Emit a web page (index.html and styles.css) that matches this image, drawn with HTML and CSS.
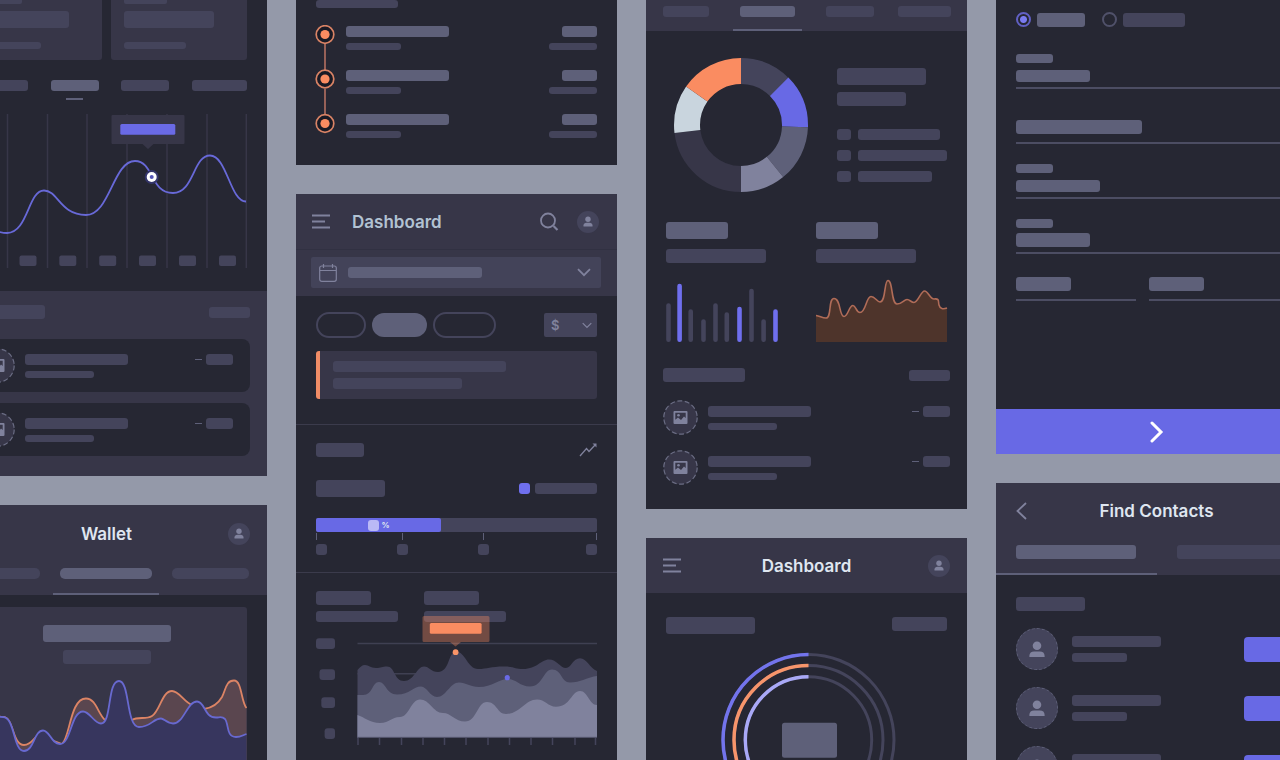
FILE: index.html
```html
<!DOCTYPE html>
<html lang="en">
<head>
  <meta charset="UTF-8" />
  <meta name="viewport" content="width=device-width, initial-scale=1.0"/>
  <title>Wireframe kit</title>
  <link rel="stylesheet" href="styles.css">
</head>
<body>
  <!-- Shared icons -->
  <svg class="sprite" aria-hidden="true">
    <symbol id="icon-menu" viewBox="0 0 18 15">
      <path d="M0 1.5h18M0 7.5h13M0 13.5h18" fill="none" stroke="currentColor" stroke-width="1.8"/>
    </symbol>
    <symbol id="icon-user" viewBox="0 0 22 22">
      <circle cx="11" cy="8.2" r="2.7" fill="currentColor"/>
      <path d="M6.5 15.5v-1.2c0-1.6 1.300-2.600 3-2.600h3c1.700 0 3 1 3 2.600v1.200z" fill="currentColor"/>
    </symbol>
    <symbol id="icon-contact" viewBox="0 0 42 42">
      <circle cx="21" cy="17.500" r="4.500" fill="currentColor"/>
      <path d="M13 29.500v-1.500c0-3 2-4.500 5-4.500h6c3 0 5 1.500 5 4.500v1.500z" fill="currentColor"/>
    </symbol>
    <symbol id="icon-search" viewBox="0 0 20 20">
      <circle cx="9" cy="8.500" r="7" fill="none" stroke="currentColor" stroke-width="1.8"/>
      <path d="M14.500 14l4 4" fill="none" stroke="currentColor" stroke-width="2.200"/>
    </symbol>
    <symbol id="icon-calendar" viewBox="0 0 18 18">
      <rect x="0.7" y="2" width="16.600" height="15.300" rx="2" fill="none" stroke="currentColor" stroke-width="1.200"/>
      <path d="M1 6.500h16M4.500 0v4M13.500 0v4" fill="none" stroke="currentColor" stroke-width="1.200"/>
    </symbol>
    <symbol id="icon-down" viewBox="0 0 14 9">
      <path d="M1 1.200l6 6 6-6" fill="none" stroke="currentColor" stroke-width="1.800"/>
    </symbol>
    <symbol id="icon-trend" viewBox="0 0 18 14">
      <path d="M1 13L7.500 5.500l2.500 3L16.500 1.500" fill="none" stroke="currentColor" stroke-width="1.300"/>
      <path d="M13.500 0.500h4v4z" fill="currentColor"/>
    </symbol>
    <symbol id="icon-image" viewBox="0 0 35 35">
      <circle cx="17.500" cy="17.500" r="16.700" fill="#373648" stroke="#6b6d84" stroke-width="1.200" stroke-dasharray="5 2.500"/>
      <path fill="#80829d" fill-rule="evenodd" d="M11.500 11h12a1 1 0 0 1 1 1v11a1 1 0 0 1-1 1h-12a1 1 0 0 1-1-1v-11a1 1 0 0 1 1-1zM12.300 12.800v7l2.700-2.300 3 2.500 3-3.500 1.700 1.500v-5.200z"/>
      <circle cx="15.500" cy="15.300" r="1.300" fill="#80829d"/>
    </symbol>
  </svg>

  <main class="board">

    <!-- Column 1 -->
    <div class="column">
      <section class="screen">
        <div class="stats">
          <div class="stat">
            <span class="bar stub w43"></span>
            <span class="bar xl w90"></span>
            <span class="bar s w62"></span>
          </div>
          <div class="stat">
            <span class="bar stub w43"></span>
            <span class="bar xl w90"></span>
            <span class="bar s w62"></span>
          </div>
        </div>
        <nav class="range-tabs">
          <a href="#" aria-label="Day"><span class="bar w62"></span></a>
          <a href="#" class="active" aria-label="Week"><span class="bar light w48"></span></a>
          <a href="#" aria-label="Month"><span class="bar w48"></span></a>
          <a href="#" aria-label="Year"><span class="bar w55"></span></a>
        </nav>
        <svg class="chart line-chart" viewBox="-34 112 281 158">
          <path d="M-32.500 114v154M7.500 114v154M47.500 114v154M87 114v154M127 114v154M167 114v154M207 114v154M246.300 114v154" stroke="#373648" stroke-width="1.500"/>
          <g fill="#44445b">
            <rect x="-20" y="255.500" width="17" height="10.500" rx="2"/>
            <rect x="19.500" y="255.500" width="17" height="10.500" rx="2"/>
            <rect x="59.300" y="255.500" width="17" height="10.500" rx="2"/>
            <rect x="99.200" y="255.500" width="17" height="10.500" rx="2"/>
            <rect x="139" y="255.500" width="17" height="10.500" rx="2"/>
            <rect x="179" y="255.500" width="17" height="10.500" rx="2"/>
            <rect x="219" y="255.500" width="17" height="10.500" rx="2"/>
          </g>
          <path d="M-34 215C-20 222 -7 233 7 233C28 233 28 190.500 44 190.500C58 190.500 60 215 86 215C110 215 113 161 135 161C154 161 150 193 173 193C194 193 193 155.500 210 155.500C227 155.500 230 201.500 246 201.500" fill="none" stroke="#6869d8" stroke-width="1.800"/>
          <path d="M112.500 115h71a1 1 0 0 1 1 1v27a1 1 0 0 1-1 1h-30l-5.500 5-5.500-5h-30a1 1 0 0 1-1-1v-27a1 1 0 0 1 1-1z" fill="#373648"/>
          <rect x="120.300" y="124" width="55" height="10.700" rx="1.500" fill="#6a6ae6"/>
          <circle cx="151.700" cy="177" r="7" fill="#34356a"/>
          <circle cx="151.700" cy="177" r="5" fill="#fff"/>
          <circle cx="151.700" cy="177" r="2" fill="#5455b8"/>
        </svg>
        <div class="activity raised">
          <div class="activity-head">
            <span class="bar l w82"></span>
            <span class="bar w41"></span>
          </div>
          <ul class="activity-list">
            <li>
              <svg class="thumb"><use href="#icon-image"/></svg>
              <div class="lines"><span class="bar w103"></span><span class="bar s w69"></span></div>
              <div class="amount"><i class="dash"></i><span class="bar w27"></span></div>
            </li>
            <li>
              <svg class="thumb"><use href="#icon-image"/></svg>
              <div class="lines"><span class="bar w103"></span><span class="bar s w69"></span></div>
              <div class="amount"><i class="dash"></i><span class="bar w27"></span></div>
            </li>
          </ul>
        </div>
      </section>

      <section class="screen last">
        <header class="top wallet-top">
          <div class="title-row">
            <h2>Wallet</h2>
            <button class="avatar" aria-label="Profile"><svg><use href="#icon-user"/></svg></button>
          </div>
          <nav class="tabs wallet-tabs">
            <a href="#" aria-label="Cards"><span class="bar round w77"></span></a>
            <a href="#" class="active" aria-label="Balance"><span class="bar round light w92"></span></a>
            <a href="#" aria-label="History"><span class="bar round w77"></span></a>
          </nav>
        </header>
        <div class="balance">
          <span class="bar xl light w128"></span>
          <span class="bar l w88"></span>
          <svg class="chart" viewBox="-34 678 281 100">
            <path d="M-34 725C-20 700 -8 717 3 717C14 717 12 745 24 745C31 745 34 738 38 735L62 744C70 738 70 698.500 86 698.500C96 698.500 98 714 105 720L132 720C138 716 146 720 152 716C160 711 162 691 172 691C179 691 184 702 192 705L204 709C211 708 218 704 222 697C226 689 226 680.500 234 680.500C242 680.500 241 702 246.500 708V778H-34Z" fill="#5a464f"/>
            <path d="M-34 725C-20 700 -8 717 3 717C14 717 12 745 24 745C31 745 34 738 38 735L62 744C70 738 70 698.500 86 698.500C96 698.500 98 714 105 720L132 720C138 716 146 720 152 716C160 711 162 691 172 691C179 691 184 702 192 705L204 709C211 708 218 704 222 697C226 689 226 680.500 234 680.500C242 680.500 241 702 246.500 708" fill="none" stroke="#dc8465" stroke-width="1.800"/>
            <path d="M-34 730C-20 715 -8 717 3 717C15 717 13 751 24 751C34 751 34 730.500 43 730.500C50 730.500 51 744 60 744C71 744 71 711.500 83 711.500C90 711.500 94 723.500 101 723.500C112 723.500 107 681 119 681C130 681 126 727 139 727C151 727 153 718.500 161 718.500C164 718.500 167 723.500 173 723.500C184 723.500 187 701.500 197 701.500C205 701.500 204 717.500 216 717.500C220 717.500 222 716 225 719C229 724 226 737 236 737C241 737 243 735 246.500 734V778H-34Z" fill="#37365e"/>
            <path d="M-34 730C-20 715 -8 717 3 717C15 717 13 751 24 751C34 751 34 730.500 43 730.500C50 730.500 51 744 60 744C71 744 71 711.500 83 711.500C90 711.500 94 723.500 101 723.500C112 723.500 107 681 119 681C130 681 126 727 139 727C151 727 153 718.500 161 718.500C164 718.500 167 723.500 173 723.500C184 723.500 187 701.500 197 701.500C205 701.500 204 717.500 216 717.500C220 717.500 222 716 225 719C229 724 226 737 236 737C241 737 243 735 246.500 734" fill="none" stroke="#6869d0" stroke-width="1.800"/>
          </svg>
        </div>
      </section>
    </div>

    <!-- Column 2 -->
    <div class="column">
      <section class="screen steps">
        <span class="bar steps-title w82"></span>
        <div class="steps-body">
          <svg class="steps-line" viewBox="0 0 20 110">
            <path d="M10 19v26M10 64v25" stroke="#a4685c" stroke-width="1.800"/>
            <g fill="#191a25" stroke="#d98365" stroke-width="1.700">
              <circle cx="10" cy="9.500" r="8.800"/>
              <circle cx="10" cy="54" r="8.800"/>
              <circle cx="10" cy="98.500" r="8.800"/>
            </g>
            <g fill="#fa8c61">
              <circle cx="10" cy="9.500" r="4.600"/>
              <circle cx="10" cy="54" r="4.600"/>
              <circle cx="10" cy="98.500" r="4.600"/>
            </g>
          </svg>
          <ol class="steps-list">
            <li>
              <div class="lines"><span class="bar light w103"></span><span class="bar s w55"></span></div>
              <div class="lines end"><span class="bar light w35"></span><span class="bar s w48"></span></div>
            </li>
            <li>
              <div class="lines"><span class="bar light w103"></span><span class="bar s w55"></span></div>
              <div class="lines end"><span class="bar light w35"></span><span class="bar s w48"></span></div>
            </li>
            <li>
              <div class="lines"><span class="bar light w103"></span><span class="bar s w55"></span></div>
              <div class="lines end"><span class="bar light w35"></span><span class="bar s w48"></span></div>
            </li>
          </ol>
        </div>
      </section>

      <section class="screen last">
        <header class="top">
          <div class="title-row left">
            <button class="menu" aria-label="Menu"><svg><use href="#icon-menu"/></svg></button>
            <h2 class="muted">Dashboard</h2>
            <button class="search" aria-label="Search"><svg><use href="#icon-search"/></svg></button>
            <button class="avatar" aria-label="Profile"><svg><use href="#icon-user"/></svg></button>
          </div>
          <div class="filter">
            <button class="date-picker" aria-label="Date range">
              <svg class="calendar"><use href="#icon-calendar"/></svg>
              <span class="bar light w134"></span>
              <svg class="down"><use href="#icon-down"/></svg>
            </button>
          </div>
        </header>

        <div class="block overview">
          <div class="pills">
            <button class="pill w50" aria-label="All"></button>
            <button class="pill on w55" aria-label="Income"></button>
            <button class="pill w63" aria-label="Expenses"></button>
            <label class="currency">
              <select aria-label="Currency"><option>$</option></select>
              <svg class="down small"><use href="#icon-down"/></svg>
            </label>
          </div>
          <div class="notice">
            <span class="bar w173"></span>
            <span class="bar w129"></span>
          </div>
        </div>

        <div class="block goal">
          <div class="between">
            <span class="bar l w48"></span>
            <svg class="trend"><use href="#icon-trend"/></svg>
          </div>
          <div class="between goal-row">
            <span class="bar xl w69"></span>
            <div class="legend"><i class="swatch"></i><span class="bar w62"></span></div>
          </div>
          <div class="progress">
            <div class="progress-fill" style="width: 44.6%"><i class="value"></i>%</div>
          </div>
          <div class="scale">
            <span class="mark first"></span>
            <span class="mark"></span>
            <span class="mark"></span>
            <span class="mark end"></span>
          </div>
        </div>

        <div class="block volume">
          <div class="pairs">
            <div><span class="bar l w55"></span><span class="bar w82"></span></div>
            <div><span class="bar l w55"></span><span class="bar w82"></span></div>
          </div>
          <svg class="chart area-chart" viewBox="316 630 281 118">
            <g fill="#44445b">
              <rect x="316" y="638.300" width="19" height="10.700" rx="3"/>
              <rect x="319.500" y="669.300" width="15.500" height="10.700" rx="3"/>
              <rect x="321.300" y="697.300" width="13.700" height="10.700" rx="3"/>
              <rect x="324.600" y="728.300" width="10.400" height="10.700" rx="3"/>
            </g>
            <path d="M357.500 643.500H597M357.500 673.700H597" stroke="#3f4052" stroke-width="1.400"/>
            <path d="M357.500 670C360 667 362 665 365 665C369 665 370 668 376 668C381 668 382 666.500 387 666.500C395 666.500 394 681 404 681C414 681 417 666.500 424 666.500C429 666.500 431 672 438 672C450 672 448 651.500 456 651.500C465 651.500 468 669 478 669C488 669 490 666.500 504 666.500C515 666.500 515 669 523 669C537 669 541 659.500 549 659.500C557 659.500 560 668 566 668C571 668 573 658.300 580 658.300C587 658.300 590 669 597 671V737H357.500Z" fill="#44445b"/>
            <path d="M357.500 695H363C373 695 372 682 379 682C386 682 386 694.500 397 694.500C410 694.500 413 686.500 421 686.500C427 686.500 430 697 437 697C446 697 450 682.500 459 682.500C466 682.500 470 687 479 687C492 687 499 679 508 679C516 679 520 686.500 530 686.500C543 686.500 543 669.500 552 669.500C562 669.500 561 682.500 570 682.500C580 682.500 588 677 597 676V737H357.500Z" fill="#5e6079"/>
            <path d="M357.500 715C364 717 370 723 380 723C390 723 391 717 400 717C409 717 411 699.500 420 699.500C430 699.500 433 713 443 713C451 713 455 721.500 465 721.500C477 721.500 477 702 487 702C497 702 497 714 506 714C520 714 525 699.500 537 699.500C545 699.500 548 706.700 556 706.700C571 706.700 571 691 580 691C588 691 589 705 597 705V737H357.500Z" fill="#80829d"/>
            <path d="M357 737.300H597" stroke="#5e6079"/>
            <path d="M358 738v7M379.500 738v7M401.500 738v7M423 738v7M444.500 738v7M466 738v7M488 738v7M509.500 738v7M531 738v7M552.500 738v7M575 738v7M595.500 738v7" stroke="#44445b" stroke-width="1.500"/>
            <path d="M424 616h64a1.500 1.500 0 0 1 1.500 1.500v23a1.500 1.500 0 0 1-1.500 1.500h-27l-5.500 4.500-5.500-4.500h-26a1.500 1.500 0 0 1-1.500-1.500v-23a1.500 1.500 0 0 1 1.500-1.500z" fill="#fa8c61" fill-opacity="0.36"/>
            <rect x="429.800" y="623" width="51.800" height="10.700" rx="1.500" fill="#fa8c61"/>
            <circle cx="455.600" cy="652.200" r="2.900" fill="#fa9468"/>
            <circle cx="507.300" cy="677.700" r="2.600" fill="#6a6ae6"/>
          </svg>
        </div>
      </section>
    </div>

    <!-- Column 3 -->
    <div class="column">
      <section class="screen report">
        <header class="top">
          <nav class="tabs report-tabs">
            <a href="#" aria-label="Daily"><span class="bar w46"></span></a>
            <a href="#" class="active" aria-label="Weekly"><span class="bar light w55"></span></a>
            <a href="#" aria-label="Monthly"><span class="bar w48"></span></a>
            <a href="#" aria-label="Yearly"><span class="bar w53"></span></a>
          </nav>
        </header>
        <div class="share">
          <svg class="donut" viewBox="0 0 134 134">
            <g fill="none" stroke-width="26" transform="rotate(-90 67 67)">
              <circle cx="67" cy="67" r="54" pathLength="360" stroke="#44445b" stroke-dasharray="46 314"/>
              <circle cx="67" cy="67" r="54" pathLength="360" stroke="#6869e5" stroke-dasharray="47 313" stroke-dashoffset="-45"/>
              <circle cx="67" cy="67" r="54" pathLength="360" stroke="#5e6079" stroke-dasharray="49 311" stroke-dashoffset="-92"/>
              <circle cx="67" cy="67" r="54" pathLength="360" stroke="#80829d" stroke-dasharray="39 321" stroke-dashoffset="-141"/>
              <circle cx="67" cy="67" r="54" pathLength="360" stroke="#373648" stroke-dasharray="83 277" stroke-dashoffset="-180"/>
              <circle cx="67" cy="67" r="54" pathLength="360" stroke="#c9d5de" stroke-dasharray="42 318" stroke-dashoffset="-263"/>
              <circle cx="67" cy="67" r="54" pathLength="360" stroke="#fa8c61" stroke-dasharray="55 305" stroke-dashoffset="-305"/>
            </g>
          </svg>
          <div class="share-info">
            <span class="bar xl w89"></span>
            <span class="bar l w69"></span>
            <ul class="keys">
              <li><i class="key"></i><span class="bar w82"></span></li>
              <li><i class="key"></i><span class="bar w89"></span></li>
              <li><i class="key"></i><span class="bar w74"></span></li>
            </ul>
          </div>
        </div>
        <div class="minis">
          <div class="mini">
            <span class="bar xl light w62"></span>
            <span class="bar l w100"></span>
            <svg class="chart" viewBox="666 279 131 64">
              <g fill="none" stroke="#44445b" stroke-width="4.600" stroke-linecap="round">
                <path d="M668.500 305.500V339.800M690.700 311.500V339.800M703.500 321.500V339.800M715.500 305.500V339.800M726.800 314.500V339.800M751.500 291V339.800M763.600 321.500V339.800"/>
                <path stroke="#6f6fee" d="M679.600 286V339.800M739.500 309V339.800M775.500 311.500V339.800"/>
              </g>
            </svg>
          </div>
          <div class="mini">
            <span class="bar xl light w62"></span>
            <span class="bar l w100"></span>
            <svg class="chart" viewBox="816 279 131 64">
              <path fill="#4e342b" d="M816 315.500C820 316 822 318 826 318C832 318 828 298.500 834 298.500C841 298.500 839 316.500 844 316.500C848 316.500 849 305.500 853 305.500C856 305.500 856 312.500 860 312.500C866 312.500 866 296.500 871 296.500C875 296.500 877 302 880 302C886 302 884 280.500 888 280.500C893 280.500 891 304 897 304C902 304 904 299.500 907 299.500C910 299.500 911 302.500 914 302.500C918 302.500 921 291 924.500 291C928 291 930 299 934 299C940 298 938 302 939 305C940 309 943 309.500 947 308V342H816Z"/>
              <path fill="none" stroke="#b06c58" stroke-width="1.600" d="M816 315.500C820 316 822 318 826 318C832 318 828 298.500 834 298.500C841 298.500 839 316.500 844 316.500C848 316.500 849 305.500 853 305.500C856 305.500 856 312.500 860 312.500C866 312.500 866 296.500 871 296.500C875 296.500 877 302 880 302C886 302 884 280.500 888 280.500C893 280.500 891 304 897 304C902 304 904 299.500 907 299.500C910 299.500 911 302.500 914 302.500C918 302.500 921 291 924.500 291C928 291 930 299 934 299C940 298 938 302 939 305C940 309 943 309.500 947 308"/>
            </svg>
          </div>
        </div>
        <div class="activity">
          <div class="activity-head">
            <span class="bar l w82"></span>
            <span class="bar w41"></span>
          </div>
          <ul class="activity-list">
            <li>
              <svg class="thumb"><use href="#icon-image"/></svg>
              <div class="lines"><span class="bar w103"></span><span class="bar s w69"></span></div>
              <div class="amount"><i class="dash"></i><span class="bar w27"></span></div>
            </li>
            <li>
              <svg class="thumb"><use href="#icon-image"/></svg>
              <div class="lines"><span class="bar w103"></span><span class="bar s w69"></span></div>
              <div class="amount"><i class="dash"></i><span class="bar w27"></span></div>
            </li>
          </ul>
        </div>
      </section>

      <section class="screen last">
        <header class="top">
          <div class="title-row">
            <button class="menu" aria-label="Menu"><svg><use href="#icon-menu"/></svg></button>
            <h2>Dashboard</h2>
            <button class="avatar" aria-label="Profile"><svg><use href="#icon-user"/></svg></button>
          </div>
        </header>
        <div class="rings">
          <div class="between top-align">
            <span class="bar xl w89"></span>
            <span class="bar l w55"></span>
          </div>
          <svg class="chart" viewBox="666 652 281 180">
            <g fill="none" stroke="#44445b" stroke-width="3">
              <circle cx="808.500" cy="740" r="85.500"/>
              <circle cx="808.500" cy="740" r="74.500"/>
              <circle cx="808.500" cy="740" r="63.200"/>
            </g>
            <g fill="none" stroke-width="3.500">
              <path d="M808.500 654.500a85.500 85.500 0 0 0 0 171" stroke="#7374ec"/>
              <path d="M808.500 665.500a74.500 74.500 0 0 0 0 149" stroke="#f7956b"/>
              <path d="M808.500 676.800a63.200 63.200 0 0 0 0 126.400" stroke="#a9a9f7"/>
            </g>
            <rect x="782" y="722.700" width="55" height="35" rx="2.500" fill="#5e6079"/>
          </svg>
        </div>
      </section>
    </div>

    <!-- Column 4 -->
    <div class="column">
      <section class="screen">
        <form class="details">
          <div class="choices">
            <label><input type="radio" name="kind" aria-label="Personal" checked><span class="bar l light w48"></span></label>
            <label><input type="radio" name="kind" aria-label="Business"><span class="bar l w62"></span></label>
          </div>
          <label class="field">
            <span class="bar m light w37"></span>
            <span class="control"><input type="text" aria-label="First name"><span class="bar v light w74"></span></span>
          </label>
          <label class="field">
            <span class="control plain"><input type="text" aria-label="Last name"><span class="bar l light w126"></span></span>
          </label>
          <label class="field">
            <span class="bar m light w37"></span>
            <span class="control"><input type="text" aria-label="Email"><span class="bar v light w84"></span></span>
          </label>
          <label class="field">
            <span class="bar m light w37"></span>
            <span class="control"><input type="text" aria-label="Phone"><span class="bar l light w74"></span></span>
          </label>
          <div class="field-pair">
            <label class="field">
              <span class="control plain"><input type="text" aria-label="City"><span class="bar l light w55"></span></span>
            </label>
            <label class="field">
              <span class="control plain"><input type="text" aria-label="Postcode"><span class="bar l light w55"></span></span>
            </label>
          </div>
          <button type="button" class="next" aria-label="Next">
            <svg viewBox="0 0 14 22"><path d="M2 2l9 9-9 9" fill="none" stroke="currentColor" stroke-width="3" stroke-linecap="round"/></svg>
          </button>
        </form>
      </section>

      <section class="screen last">
        <header class="top">
          <div class="title-row">
            <button class="back" aria-label="Back"><svg viewBox="0 0 11 18"><path d="M10 1L1.500 9l8.500 8" fill="none" stroke="currentColor" stroke-width="1.800"/></svg></button>
            <h2>Find Contacts</h2>
          </div>
          <nav class="tabs half-tabs">
            <a href="#" class="active" aria-label="All contacts"><span class="bar l light w120"></span></a>
            <a href="#" aria-label="Suggested"><span class="bar l w120"></span></a>
          </nav>
        </header>
        <div class="contacts">
          <span class="bar l w69"></span>
          <ul class="contact-list">
            <li>
              <svg class="face"><use href="#icon-contact"/></svg>
              <div class="lines"><span class="bar w89"></span><span class="bar m w55"></span></div>
              <button class="add" aria-label="Add contact"></button>
            </li>
            <li>
              <svg class="face"><use href="#icon-contact"/></svg>
              <div class="lines"><span class="bar w89"></span><span class="bar m w55"></span></div>
              <button class="add" aria-label="Add contact"></button>
            </li>
            <li>
              <svg class="face"><use href="#icon-contact"/></svg>
              <div class="lines"><span class="bar w89"></span><span class="bar m w55"></span></div>
              <button class="add" aria-label="Add contact"></button>
            </li>
          </ul>
        </div>
      </section>
    </div>

  </main>
</body>
</html>
```

FILE: styles.css
```css
* {
  box-sizing: border-box;
}
body {
  margin: 0;
  height: 100vh;
  overflow: hidden;
  background: #9499a9;
  color: #dfe6f0;
  font-family: Inter, "Liberation Sans", sans-serif;
}
ul, ol {
  list-style: none;
  margin: 0;
  padding: 0;
}
button {
  padding: 0;
  border: none;
  background: none;
  color: #80829d;
  cursor: pointer;
}
svg {
  display: block;
}
.sprite {
  display: none;
}

/* Board: four phone columns, the outer two run off the edges */
.board {
  display: grid;
  grid-template-columns: repeat(4, 1fr);
  gap: 29px;
  width: calc(100% + 91px);
  height: 100%;
  margin-left: -54px;
}
.column {
  display: flex;
  flex-direction: column;
  gap: 29px;
  height: 100vh;
  min-width: 0;
  overflow: hidden;
}
.screen {
  background: #262733;
  flex: none;
}
.screen.last {
  flex: 1;
  min-height: 0;
  overflow: hidden;
}

/* Placeholder bars */
.bar {
  display: block;
  flex: none;
  height: 11px;
  border-radius: 3px;
  background: #44445b;
}
.bar.s { height: 7px; }
.bar.m { height: 9px; }
.bar.v { height: 12px; }
.bar.l { height: 14px; }
.bar.xl { height: 17px; }
.bar.stub { height: 4px; border-radius: 0 0 2px 2px; }
.bar.light { background: #5e6079; }
.bar.round { border-radius: 5px; }
.w27 { width: 27px; }
.w35 { width: 35px; }
.w37 { width: 37px; }
.w41 { width: 41px; }
.w43 { width: 43px; }
.w46 { width: 46px; }
.w48 { width: 48px; }
.w50 { width: 50px; }
.w53 { width: 53px; }
.w55 { width: 55px; }
.w62 { width: 62px; }
.w63 { width: 63px; }
.w69 { width: 69px; }
.w74 { width: 74px; }
.w77 { width: 77px; }
.w82 { width: 82px; }
.w84 { width: 84px; }
.w88 { width: 88px; }
.w89 { width: 89px; }
.w90 { width: 90px; }
.w92 { width: 92px; }
.w100 { width: 100px; }
.w103 { width: 103px; }
.w120 { width: 120px; }
.w126 { width: 126px; }
.w128 { width: 128px; }
.w129 { width: 129px; }
.w134 { width: 134px; }
.w173 { width: 173px; }

.lines {
  display: flex;
  flex-direction: column;
  gap: 6px;
}
.lines.end {
  align-items: flex-end;
}
.between {
  display: flex;
  justify-content: space-between;
  align-items: center;
}
.top-align {
  align-items: flex-start;
}
.chart {
  width: 100%;
  height: auto;
  overflow: visible;
}

/* Screen header */
.top {
  background: #373648;
}
.title-row {
  display: grid;
  grid-template-columns: 1fr auto 1fr;
  align-items: center;
  height: 55px;
  padding: 0 17px;
}
.title-row h2 {
  grid-column: 2;
  margin: 0;
  font-size: 17px;
  line-height: 24px;
  font-weight: 600;
}
.title-row .avatar {
  grid-column: 3;
  justify-self: end;
}
.title-row.left {
  display: flex;
  padding: 0 18px 0 16px;
}
.title-row.left h2 {
  flex: 1;
  margin-left: 22px;
}
.title-row h2.muted {
  color: #b2c2d2;
}
.menu svg {
  width: 18px;
  height: 15px;
}
.search {
  margin-right: 18px;
}
.search svg {
  width: 20px;
  height: 20px;
}
.back {
  justify-self: start;
  margin-left: 3px;
}
.back svg {
  width: 11px;
  height: 18px;
}
.avatar {
  border-radius: 50%;
  background: #44445b;
}
.avatar svg {
  width: 22px;
  height: 22px;
}

/* Tabs */
.tabs {
  display: flex;
  padding: 0 17px;
}
.tabs a {
  border-bottom: 2px solid transparent;
}
.tabs a.active {
  border-color: #5e6079;
}
.wallet-top .title-row {
  height: 58px;
}
.wallet-tabs {
  gap: 13px;
}
.wallet-tabs a {
  padding: 5px 0 14px;
}
.wallet-tabs .active,
.report-tabs .active {
  padding-left: 7px;
  padding-right: 7px;
}
.report-tabs {
  gap: 24px;
}
.report-tabs a {
  padding: 6px 0 12px;
}
.half-tabs {
  padding: 0;
}
.half-tabs a {
  flex: 1;
  display: flex;
  justify-content: center;
  padding: 7px 0 14px;
}

/* Stats and line chart */
.stats {
  display: grid;
  grid-template-columns: 1fr 1fr;
  gap: 9px;
  padding: 0 20px;
}
.stat {
  padding: 0 13px 11px;
  border-radius: 0 0 3px 3px;
  background: #373648;
}
.stat .bar.xl {
  margin: 7px 0 14px;
}
.range-tabs {
  display: flex;
  justify-content: space-between;
  padding: 20px 20px 12px;
}
.range-tabs a {
  height: 20px;
}
.range-tabs .active::after {
  content: "";
  display: block;
  width: 17px;
  height: 2px;
  margin: 7px auto 0;
  background: #5e6079;
}
.line-chart {
  padding: 0 20px;
  margin-bottom: 21px;
}

/* Activity list */
.activity {
  padding: 25px 17px 24px;
}
.activity-head {
  display: flex;
  justify-content: space-between;
  align-items: center;
  margin-bottom: 18px;
}
.activity-list {
  display: grid;
  gap: 15px;
}
.activity-list li {
  display: flex;
  align-items: center;
  gap: 10px;
}
.thumb {
  width: 35px;
  height: 35px;
}
.amount {
  display: flex;
  align-items: center;
  align-self: flex-start;
  gap: 4px;
  margin: 6px 0 0 auto;
}
.dash {
  width: 7px;
  height: 1px;
  background: #5e6079;
}
.raised {
  padding: 14px 17px 20px;
  background: #373648;
}
.raised .activity-head {
  margin-bottom: 20px;
}
.raised .activity-list {
  gap: 11px;
}
.raised li {
  padding: 9px 17px;
  border-radius: 8px;
  background: #262733;
}

/* Wallet */
.balance {
  display: flex;
  flex-direction: column;
  align-items: center;
  gap: 8px;
  margin: 12px 20px 0;
  padding-top: 18px;
  border-radius: 3px;
  background: #373648;
}
.balance .chart {
  margin-top: 6px;
}

/* Steps */
.steps {
  padding: 0 20px 27px;
}
.steps-title {
  height: 8px;
}
.steps-body {
  display: flex;
  gap: 11px;
  margin-top: 17px;
}
.steps-line {
  width: 20px;
  height: 110px;
  margin-left: -1px;
}
.steps-list {
  flex: 1;
  display: grid;
  gap: 20px;
  align-content: start;
  padding-top: 1px;
}
.steps-list li {
  display: flex;
  justify-content: space-between;
}

/* Dashboard */
.filter {
  padding: 7px 16px 8px 15px;
  border-top: 1px solid #313142;
}
.date-picker {
  display: flex;
  align-items: center;
  width: 100%;
  height: 31px;
  padding: 0 10px 0 8px;
  border-radius: 2px;
  background: #434359;
}
.calendar {
  width: 18px;
  height: 18px;
  margin-right: 11px;
}
.down {
  width: 14px;
  height: 9px;
  margin-left: auto;
}
.down.small {
  width: 10px;
  height: 7px;
}
.block {
  padding: 18px 20px 17px;
  border-bottom: 1px solid #3b3b4c;
}
.overview {
  padding: 16px 20px 25px;
}
.pills {
  display: flex;
  align-items: center;
  gap: 6px;
  margin-bottom: 13px;
}
.pill {
  height: 26px;
  border: 2px solid #44445b;
  border-radius: 13px;
}
.pill.on {
  height: 24px;
  border: none;
  background: #5e6079;
}
.currency {
  display: grid;
  align-items: center;
  width: 53px;
  height: 24px;
  margin-left: auto;
  border-radius: 2px;
  background: #44445b;
}
.currency select,
.currency svg {
  grid-area: 1 / 1;
}
.currency select {
  appearance: none;
  width: 100%;
  height: 24px;
  padding: 0 7px;
  border: none;
  background: none;
  color: #80829d;
  font-family: inherit;
  font-size: 13px;
  font-weight: 600;
}
.currency svg {
  justify-self: end;
  margin-right: 5px;
  color: #80829d;
  pointer-events: none;
}
.notice {
  display: grid;
  gap: 6px;
  padding: 10px 13px;
  border-left: 4px solid #f08c66;
  border-radius: 3px;
  background: #373648;
}
.trend {
  width: 18px;
  height: 14px;
  color: #80829d;
}
.goal-row {
  margin: 23px 0 21px;
}
.legend {
  display: flex;
  gap: 5px;
}
.swatch {
  width: 11px;
  height: 11px;
  border-radius: 3px;
  background: #6f6fee;
}
.progress {
  border-radius: 2px;
  background: #44445b;
}
.progress-fill {
  display: flex;
  align-items: center;
  justify-content: center;
  gap: 3px;
  height: 14px;
  border-radius: 2px;
  background: #6869e5;
  font-size: 8px;
  font-weight: 700;
}
.value {
  width: 11px;
  height: 11px;
  border-radius: 3px;
  background: #bab9f6;
}
.scale {
  display: grid;
  grid-template-columns: 81fr 81fr 108fr 11px;
}
.mark {
  width: 11px;
}
.mark::before {
  content: "";
  display: block;
  width: 1px;
  height: 7px;
  margin: 1px auto 4px;
  background: #5e6079;
}
.mark.first::before {
  margin-left: 0;
}
.mark.end::before {
  margin-right: 0;
}
.mark::after {
  content: "";
  display: block;
  height: 11px;
  border-radius: 3px;
  background: #44445b;
}
.pairs {
  display: grid;
  grid-template-columns: 108fr 173fr;
}
.pairs .l {
  margin-bottom: 6px;
}
.area-chart {
  margin-top: 8px;
}

/* Report */
.share {
  display: flex;
  gap: 29px;
  padding: 27px 20px 30px 28px;
}
.donut {
  width: 134px;
  height: 134px;
}
.share-info {
  padding-top: 10px;
}
.share-info .xl {
  margin-bottom: 7px;
}
.keys {
  display: grid;
  gap: 10px;
  margin-top: 23px;
}
.keys li {
  display: flex;
  gap: 7px;
}
.key {
  width: 14px;
  height: 11px;
  border-radius: 3px;
  background: #44445b;
}
.minis {
  display: grid;
  grid-template-columns: 1fr 1fr;
  gap: 19px;
  padding: 0 20px;
}
.mini .l {
  margin: 10px 0 16px;
}

/* Rings */
.rings {
  padding: 24px 20px 0;
}
.rings .chart {
  margin-top: 18px;
}

/* Details form */
.choices {
  display: flex;
  gap: 17px;
  padding: 12px 0 7px;
}
.choices label {
  display: flex;
  align-items: center;
  gap: 6px;
}
.choices input {
  appearance: none;
  width: 15px;
  height: 15px;
  margin: 0;
  border: 2px solid #50516a;
  border-radius: 50%;
}
.choices input:checked {
  border-color: #6160c4;
  background: radial-gradient(circle, #7a7bf0 3px, transparent 4px);
}
.details {
  padding: 0 20px;
}
.field {
  display: flex;
  flex-direction: column;
  justify-content: flex-end;
  height: 55px;
}
.control {
  display: grid;
  align-items: end;
  height: 26px;
}
.control input,
.control .bar {
  grid-area: 1 / 1;
}
.control input {
  width: 100%;
  height: 26px;
  padding: 0;
  border: none;
  border-bottom: 2px solid #4c4d63;
  background: none;
  color: #dfe6f0;
  outline: none;
}
.control .bar {
  margin-bottom: 7px;
}
.control.plain .bar {
  margin-bottom: 10px;
}
.field-pair {
  display: grid;
  grid-template-columns: 120fr 148fr;
  gap: 13px;
}
.field-pair .field {
  height: 47px;
}
.next {
  display: flex;
  align-items: center;
  justify-content: center;
  width: calc(100% + 40px);
  height: 45px;
  margin: 108px -20px 0;
  background: #6869e5;
  color: #fff;
}
.next svg {
  width: 14px;
  height: 22px;
}

/* Contacts */
.contacts {
  padding: 22px 20px 0;
}
.contact-list {
  display: grid;
  gap: 17px;
  margin-top: 17px;
}
.contact-list li {
  display: flex;
  align-items: center;
  gap: 14px;
}
.face {
  width: 42px;
  height: 42px;
  border: 1px dashed #5e6079;
  border-radius: 50%;
  background: #44445b;
  color: #80829d;
}
.add {
  width: 53px;
  height: 25px;
  margin-left: auto;
  border-radius: 4px;
  background: #6869e5;
}
```
